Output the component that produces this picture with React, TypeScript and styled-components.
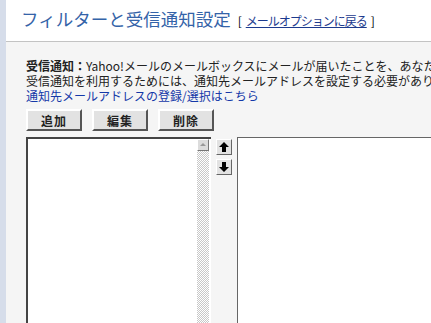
import React from "react";
import styled, { createGlobalStyle } from "styled-components";

const GlobalStyle = createGlobalStyle`
  html, body {
    margin: 0;
    padding: 0;
    overflow: hidden;
    background: #f5f5f5;
  }
  body {
    font-family: "Noto Sans CJK JP", "DejaVu Sans", sans-serif;
  }
`;

const Page = styled.div`
  display: flex;
  min-height: 100vh;
`;

const SideStrip = styled.div`
  width: 6px;
  flex-shrink: 0;
  background: #d6ddea;
`;

const Main = styled.div`
  flex: 1;
  min-width: 0;
  overflow: hidden;
`;

const Header = styled.div`
  height: 42px;
  background: #ffffff;
  border-bottom: 1px solid #c3c3c3;
  display: flex;
  align-items: baseline;
  padding: 5px 0 0 15px;
  box-sizing: border-box;
  white-space: nowrap;
`;

const Title = styled.h1`
  margin: 0;
  font-size: 17.5px;
  font-weight: normal;
  color: #3463a8;
  line-height: 28px;
`;

const BackLink = styled.span`
  margin-left: 7px;
  font-size: 12px;
  color: #000;
  a {
    color: #1c3a8e;
    text-decoration: underline;
    margin: 0 4px;
    letter-spacing: -1px;
  }
`;

const Content = styled.div`
  padding: 16px 0 0 20px;
`;

const Notice = styled.div`
  font-size: 12px;
  line-height: 15px;
  color: #222;
  white-space: nowrap;
  b {
    font-weight: bold;
  }
  a {
    color: #1438a8;
    text-decoration: none;
  }
`;

const ButtonRow = styled.div`
  display: flex;
  gap: 10px;
  margin-top: 6px;
`;

const Button = styled.button`
  width: 56px;
  height: 22px;
  padding: 0;
  background: #e2e2e2;
  border: 2px solid;
  border-color: #ffffff #555555 #555555 #ffffff;
  font-family: inherit;
  font-size: 12px;
  font-weight: bold;
  color: #222;
  letter-spacing: 1px;
`;

const ListArea = styled.div`
  display: flex;
  margin-top: 6px;
`;

const ListBox = styled.div`
  width: 185px;
  height: 200px;
  background: #ffffff;
  border-top: 2px solid #444;
  border-left: 2px solid #444;
  box-sizing: border-box;
  display: flex;
  justify-content: flex-end;
  padding-right: 2px;
`;

const ScrollTrack = styled.div`
  width: 12px;
  height: 100%;
  background-color: #ffffff;
  background-image: repeating-conic-gradient(#c8c8c8 0% 25%, #ffffff 0% 50%);
  background-size: 2px 2px;
  display: flex;
  flex-direction: column;
`;

const ScrollUp = styled.div`
  width: 12px;
  height: 12px;
  box-sizing: border-box;
  background: #dcdcdc;
  border: 1px solid;
  border-color: #ffffff #777 #777 #ffffff;
  display: flex;
  align-items: center;
  justify-content: center;
`;

const OrderColumn = styled.div`
  display: flex;
  flex-direction: column;
  gap: 4px;
  margin: 2px 5px 0 5px;
`;

const OrderButton = styled.div`
  width: 16px;
  height: 16px;
  box-sizing: border-box;
  background: #e2e2e2;
  border: 1px solid;
  border-color: #ffffff #666 #666 #ffffff;
  display: flex;
  align-items: center;
  justify-content: center;
`;

const TargetBox = styled.div`
  flex: 1;
  height: 200px;
  background: #ffffff;
  border-top: 1px solid #666;
  border-left: 1px solid #666;
`;

const Arrow = ({ down }: { down?: boolean }) => (
  <svg width="10" height="10" viewBox="0 0 10 10" style={down ? { transform: "rotate(180deg)" } : undefined}>
    <polygon points="5,0 10,5 7,5 7,10 3,10 3,5 0,5" fill="#000" />
  </svg>
);

const App: React.FC = () => {
  return (
    <>
      <GlobalStyle />
      <Page>
        <SideStrip />
        <Main>
          <Header>
            <Title>フィルターと受信通知設定</Title>
            <BackLink>
              [<a href="#">メールオプションに戻る</a>]
            </BackLink>
          </Header>
          <Content>
            <Notice>
              <div>
                <b>受信通知：</b>Yahoo!メールのメールボックスにメールが届いたことを、あなたの携帯電話などにお知らせします。
              </div>
              <div>受信通知を利用するためには、通知先メールアドレスを設定する必要があります。</div>
              <div>
                <a href="#">通知先メールアドレスの登録/選択はこちら</a>
              </div>
            </Notice>
            <ButtonRow>
              <Button>追加</Button>
              <Button>編集</Button>
              <Button>削除</Button>
            </ButtonRow>
            <ListArea>
              <ListBox>
                <ScrollTrack>
                  <ScrollUp>
                    <svg width="6" height="4" viewBox="0 0 6 4">
                      <polygon points="3,0 6,3 0,3" fill="#999" />
                    </svg>
                  </ScrollUp>
                </ScrollTrack>
              </ListBox>
              <OrderColumn>
                <OrderButton>
                  <Arrow />
                </OrderButton>
                <OrderButton>
                  <Arrow down />
                </OrderButton>
              </OrderColumn>
              <TargetBox />
            </ListArea>
          </Content>
        </Main>
      </Page>
    </>
  );
};

export default App;
